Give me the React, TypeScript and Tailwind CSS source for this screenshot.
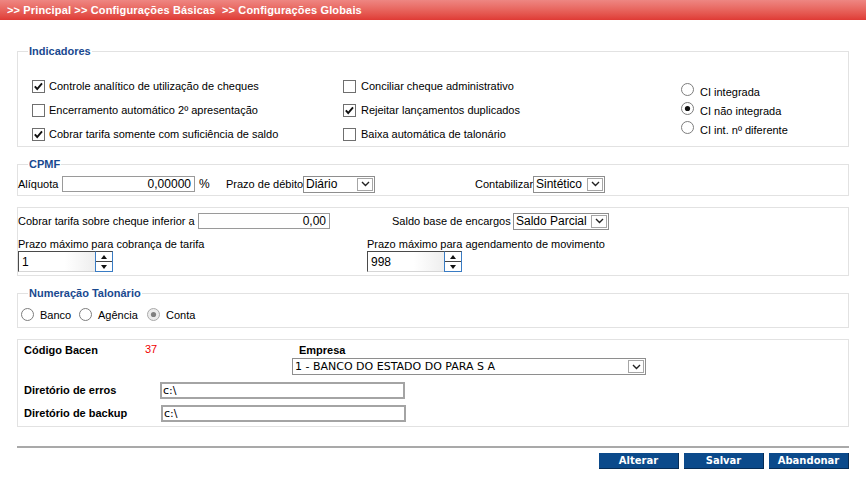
import React from 'react'

function CheckBox({ checked }: { checked?: boolean }) {
  return (
    <svg width="13" height="13" viewBox="0 0 13 13" className="shrink-0">
      <rect x="0.5" y="0.5" width="12" height="12" fill="#fff" stroke="#6f6f6f" />
      {checked && (
        <path d="M2.8 6.4 L5.2 9 L10 3.4" fill="none" stroke="#111" strokeWidth="1.9" />
      )}
    </svg>
  )
}

function Radio({ checked, disabled }: { checked?: boolean; disabled?: boolean }) {
  return (
    <svg width="13" height="13" viewBox="0 0 13 13" className="shrink-0">
      <circle
        cx="6.5"
        cy="6.5"
        r="6"
        fill={disabled ? '#ececec' : '#fff'}
        stroke={disabled ? '#a9a9a9' : '#7d7d7d'}
      />
      {checked && <circle cx="6.5" cy="6.5" r="2.6" fill={disabled ? '#808080' : '#111'} />}
    </svg>
  )
}

function Chevron() {
  return (
    <svg width="9" height="6" viewBox="0 0 9 6">
      <polyline points="1,1 4.5,4.5 8,1" fill="none" stroke="#222" strokeWidth="1.4" />
    </svg>
  )
}

function Select({ value, className, textClass }: { value: string; className: string; textClass: string }) {
  return (
    <div className={'flex h-[17px] shrink-0 items-stretch border border-[#8e8e8e] bg-white ' + className}>
      <span className={'flex-1 truncate pl-[2px] ' + textClass}>{value}</span>
      <span className="m-[1px] flex w-[16px] items-center justify-center border border-[#a6a6a6] bg-white">
        <Chevron />
      </span>
    </div>
  )
}

function Spinner({ value }: { value: string }) {
  return (
    <div className="flex h-[21px] w-[95px]">
      <div className="flex flex-1 items-center border-t border-l border-b border-t-[#4a4a4a] border-l-[#4a4a4a] border-b-[#d6d6d6] bg-gradient-to-r from-white from-60% to-[#eeeeee] pl-[3px] text-[12px]">
        {value}
      </div>
      <div className="flex w-[18px] flex-col border-t border-t-[#4a4a4a] border-x border-b border-x-[#3a7cc4] border-b-[#3a7cc4] bg-white">
        <span className="flex flex-1 items-center justify-center border-b border-[#444]">
          <svg width="6" height="4" viewBox="0 0 6 4"><polygon points="3,0 6,4 0,4" fill="#111" /></svg>
        </span>
        <span className="flex flex-1 items-center justify-center">
          <svg width="6" height="4" viewBox="0 0 6 4"><polygon points="0,0 6,0 3,4" fill="#111" /></svg>
        </span>
      </div>
    </div>
  )
}

const COL1 = [
  { label: 'Controle analítico de utilização de cheques', checked: true },
  { label: 'Encerramento automático 2º apresentação', checked: false },
  { label: 'Cobrar tarifa somente com suficiência de saldo', checked: true },
]

const COL2 = [
  { label: 'Conciliar cheque administrativo', checked: false },
  { label: 'Rejeitar lançamentos duplicados', checked: true },
  { label: 'Baixa automática de talonário', checked: false },
]

const CI = [
  { label: 'CI integrada', checked: false },
  { label: 'CI não integrada', checked: true },
  { label: 'CI int. nº diferente', checked: false },
]

const legendCls = "ml-[10px] px-[1px] text-[11px] leading-[14px] font-bold text-[#19498f]"

export default function App() {
  return (
    <div className="h-[490px] w-[866px] bg-white font-['Liberation_Sans',Arial,sans-serif] text-[11px] text-black">
      {/* breadcrumb bar */}
      <div className="h-[20px] bg-gradient-to-b from-[#ee8682] to-[#df3a35] pl-[7px] text-[11px] leading-[20px] font-bold tracking-[0.15px] text-white whitespace-pre">
        {'>> Principal >> Configurações Básicas  >> Configurações Globais'}
      </div>

      <div className="px-[17px]">
        {/* Indicadores */}
        <fieldset className="mt-[24px] border border-[#e2e2e2]">
          <legend className={legendCls}>Indicadores</legend>
          <div className="flex pt-[16px] pl-[14px]">
            <div className="w-[311px]">
              {COL1.map(c => (
                <div key={c.label} className="flex h-[24px] items-center gap-[4px]">
                  <CheckBox checked={c.checked} />
                  <span>{c.label}</span>
                </div>
              ))}
            </div>
            <div className="w-[338px]">
              {COL2.map(c => (
                <div key={c.label} className="flex h-[24px] items-center gap-[5px]">
                  <CheckBox checked={c.checked} />
                  <span>{c.label}</span>
                </div>
              ))}
            </div>
            <div className="pt-[6px]">
              {CI.map(c => (
                <div key={c.label} className="flex h-[19px] items-center gap-[6px]">
                  <Radio checked={c.checked} />
                  <span className="pt-[5px]">{c.label}</span>
                </div>
              ))}
            </div>
          </div>
        </fieldset>

        {/* CPMF */}
        <fieldset className="mt-[10px] border border-[#e2e2e2]">
          <legend className={legendCls}>CPMF</legend>
          <div className="mt-[4px] mb-[2px] flex h-[18px] items-center whitespace-nowrap">
            <span className="w-[44px] shrink-0">Alíquota</span>
            <div className="h-[16px] w-[133px] shrink-0 border border-[#9a9a9a] pr-[3px] text-right text-[12px] leading-[14px]">0,00000</div>
            <span className="w-[31px] shrink-0 pl-[4px] text-[12px]">%</span>
            <span className="w-[77px] shrink-0">Prazo de débito</span>
            <Select value="Diário" className="w-[72px]" textClass="text-[12px] leading-[15px]" />
            <span className="w-[100px] shrink-0" />
            <span className="w-[58px] shrink-0">Contabilizar</span>
            <Select value="Sintético" className="w-[72px]" textClass="text-[12px] leading-[15px]" />
          </div>
        </fieldset>

        {/* Tarifas */}
        <div className="mt-[11px] border border-[#e2e2e2] pt-[5px] pb-[3px]">
          <div className="flex h-[16px] items-center whitespace-nowrap">
            <span className="w-[180px] shrink-0">Cobrar tarifa sobre cheque inferior a</span>
            <div className="h-[16px] w-[132px] shrink-0 border border-[#9a9a9a] pr-[3px] text-right text-[12px] leading-[14px]">0,00</div>
            <span className="w-[62px] shrink-0" />
            <span className="w-[121px] shrink-0">Saldo base de encargos</span>
            <Select value="Saldo Parcial" className="w-[96px]" textClass="text-[12px] leading-[15px]" />
          </div>
          <div className="mt-[8px] flex">
            <div className="w-[349px]">
              <div className="leading-[14px]">Prazo máximo para cobrança de tarifa</div>
              <Spinner value="1" />
            </div>
            <div>
              <div className="leading-[14px]">Prazo máximo para agendamento de movimento</div>
              <Spinner value="998" />
            </div>
          </div>
        </div>

        {/* Numeração Talonário */}
        <fieldset className="mt-[10px] border border-[#e2e2e2]">
          <legend className={legendCls}>Numeração Talonário</legend>
          <div className="mt-[6px] mb-[5px] flex h-[16px] items-center pl-[3px]">
            <div className="flex w-[58px] items-center gap-[6px]">
              <Radio />
              <span className="pt-[2px]">Banco</span>
            </div>
            <div className="flex w-[68px] items-center gap-[6px]">
              <Radio />
              <span className="pt-[2px]">Agência</span>
            </div>
            <div className="flex items-center gap-[6px]">
              <Radio checked disabled />
              <span className="pt-[2px]">Conta</span>
            </div>
          </div>
        </fieldset>

        {/* Bacen */}
        <div className="mt-[11px] border border-[#e2e2e2] pt-[3px] pb-[4px]">
          <div className="flex">
            <span className="w-[127px] pl-[6px] leading-[14px] font-bold">Código Bacen</span>
            <span className="-mt-[1px] w-[147px] leading-[14px] text-[#f00000]">37</span>
            <div>
              <div className="pl-[7px] leading-[14px] font-bold">Empresa</div>
              <Select
                value="1 - BANCO DO ESTADO DO PARA S A"
                className="mt-[1px] w-[354px]"
                textClass="font-['DejaVu_Sans',Verdana,sans-serif] text-[11px] leading-[15px]"
              />
            </div>
          </div>
          <div className="mt-[7px] flex items-center">
            <span className="w-[142px] pl-[6px] font-bold">Diretório de erros</span>
            <div className="h-[17px] w-[245px] border-2 border-[#a4a4a4] pl-[1px] font-['DejaVu_Sans',Verdana,sans-serif] text-[11px] leading-[13px]">c:\</div>
          </div>
          <div className="mt-[6px] flex items-center">
            <span className="w-[143px] pl-[6px] font-bold">Diretório de backup</span>
            <div className="h-[17px] w-[245px] border-2 border-[#a4a4a4] pl-[1px] font-['DejaVu_Sans',Verdana,sans-serif] text-[11px] leading-[13px]">c:\</div>
          </div>
        </div>

        <div className="mt-[19px] h-[2px] bg-[#a9a9a9]" />

        <div className="mt-[5px] flex justify-end gap-[5px]">
          {['Alterar', 'Salvar', 'Abandonar'].map(b => (
            <button
              key={b}
              className="h-[16px] w-[80px] border-r border-b border-[#062c55] bg-[#0b4a8b] font-['DejaVu_Sans',Verdana,sans-serif] text-[10px] leading-[14px] font-bold text-white"
            >
              {b}
            </button>
          ))}
        </div>
      </div>
    </div>
  )
}
